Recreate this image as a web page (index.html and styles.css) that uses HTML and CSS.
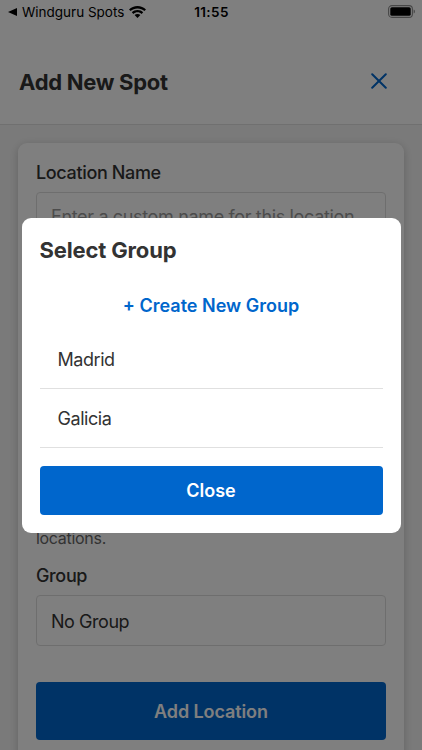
FILE: index.html
```
<!DOCTYPE html>
<html lang="en">
<head>
<meta charset="utf-8">
<meta name="viewport" content="width=device-width, initial-scale=1">
<title>Add New Spot</title>
<link rel="stylesheet" href="styles.css">
</head>
<body>
<div class="screen">
  <header class="top">
    <div class="status">
      <div class="status-left">
        <svg class="back" viewBox="0 0 9 8"><path d="M0 4 L9 0 V8 Z"/></svg>
        <span class="app">Windguru Spots</span>
        <svg class="wifi" viewBox="0 0 17 12"><path d="M8.5 0C5.2 0 2.2 1.3 0 3.4L1.6 5.1C3.4 3.4 5.8 2.4 8.5 2.4s5.1 1 6.9 2.7L17 3.4C14.8 1.3 11.8 0 8.5 0ZM8.5 4C6.300 4 4.300 4.800 2.800 6.200L4.400 7.900C5.500 6.900 6.900 6.300 8.500 6.300s3 .6 4.100 1.600L14.200 6.200C12.700 4.800 10.700 4 8.500 4ZM8.500 8C7.400 8 6.400 8.400 5.600 9L8.500 12 11.400 9C10.600 8.400 9.600 8 8.500 8Z"/></svg>
      </div>
      <span class="time">11:55</span>
      <svg class="battery" viewBox="0 0 28 14"><rect class="shell" x=".6" y=".6" width="23.800" height="11.800" rx="3.400"/><rect x="2.300" y="2.200" width="20.400" height="8.600" rx="1.600"/><path class="cap" d="M25.600 4.500C27.500 5 27.500 8 25.600 8.500Z"/></svg>
    </div>
    <div class="heading">
      <h1>Add New Spot</h1>
      <svg class="close-icon" viewBox="0 0 16 16"><path d="M1.200 1.200 14.800 14.800M14.800 1.200 1.200 14.800"/></svg>
    </div>
  </header>
  <main class="content">
    <form class="card">
      <label class="label">Location Name</label>
      <div class="field placeholder">Enter a custom name for this location</div>
      <div class="spacer"></div>
      <p class="hint">locations.</p>
      <label class="label group-label">Group</label>
      <div class="field group-field">No Group</div>
      <button class="button submit" type="button">Add Location</button>
    </form>
  </main>
</div>
<div class="overlay">
  <section class="modal">
    <h2>Select Group</h2>
    <div class="create">+ Create New Group</div>
    <div class="row">Madrid</div>
    <div class="row">Galicia</div>
    <button class="button dismiss" type="button">Close</button>
  </section>
</div>
</body>
</html>
```
FILE: styles.css
```
* { box-sizing: border-box; margin: 0; }
body {
  height: 750px;
  overflow: hidden;
  background: #f5f5f5;
  color: #333;
  font: 400 18px/22px Inter, "Liberation Sans", sans-serif;
}
.screen { height: 750px; overflow: hidden; }
.top { height: 125px; background: #fff; border-bottom: 1px solid #e0e0e0; }
.status {
  height: 24px;
  display: grid;
  grid-template-columns: 1fr auto 1fr;
  align-items: center;
  padding: 0 6px 0 8px;
  color: #000;
}
.status-left { display: flex; align-items: center; }
.back { width: 9px; height: 8px; }
.app { margin-left: 5px; font-size: 13.500px; letter-spacing: 0; white-space: nowrap; }
.wifi { width: 17px; height: 12px; margin-left: 5px; flex: none; }
.time { margin-left: -1px; font-size: 13.500px; font-weight: 600; letter-spacing: .4px; }
.battery { width: 28px; height: 14px; justify-self: end; }
.shell { fill: none; stroke: #8e8e8e; stroke-width: 1.100; }
.cap { fill: #999; }
.heading { display: flex; align-items: center; justify-content: space-between; padding: 42px 35px 0 19px; }
h1 { padding-top: 2px; font-size: 22px; line-height: 29px; font-weight: 650; letter-spacing: -.28px; }
.close-icon { width: 16px; height: 16px; margin-bottom: 2px; fill: none; stroke: #0066cc; stroke-width: 2; stroke-linecap: round; }
.content { padding: 18px; }
.card { height: 640px; padding: 18px; border-radius: 9px; background: #fff; box-shadow: 0 2px 10px rgba(0, 0, 0, .2); }
.label { display: block; padding-top: 1px; font-weight: 500; line-height: 22px; letter-spacing: -.35px; margin-bottom: 8px; }
.group-label { padding-top: 0; margin-bottom: 8px; }
.field { height: 51px; padding: 0 14px; border: 1px solid #ddd; border-radius: 4px; line-height: 49px; letter-spacing: -.35px; white-space: nowrap; }
.placeholder { color: #999; line-height: 47px; }
.group-field { line-height: 51px; letter-spacing: -.45px; }
.spacer { height: 285px; }
.hint { height: 20px; margin-bottom: 17px; font-size: 16px; line-height: 20px; letter-spacing: -.3px; color: #666; }
.button { display: block; width: 100%; border: 0; border-radius: 4px; background: #0066cc; color: #fff; font: 600 18px/22px Inter, "Liberation Sans", sans-serif; }
.submit { height: 58px; margin-top: 36px; padding-top: 2px; letter-spacing: -.1px; }
.overlay { position: absolute; inset: 0; display: flex; align-items: center; justify-content: center; background: rgba(0, 0, 0, .5); }
.modal { width: 379px; height: 315px; padding: 18px; border-radius: 9px; background: #fff; }
h2 { font-size: 22px; line-height: 28px; font-weight: 650; letter-spacing: -.15px; }
.create { height: 48px; margin-top: 18px; text-align: center; font-weight: 600; line-height: 48px; color: #0066cc; }
.row { height: 59px; padding: 0 18px; border-bottom: 1px solid #e0e0e0; line-height: 60px; letter-spacing: -.45px; }
.dismiss { height: 49px; margin-top: 18px; padding-top: 3px; }
```
